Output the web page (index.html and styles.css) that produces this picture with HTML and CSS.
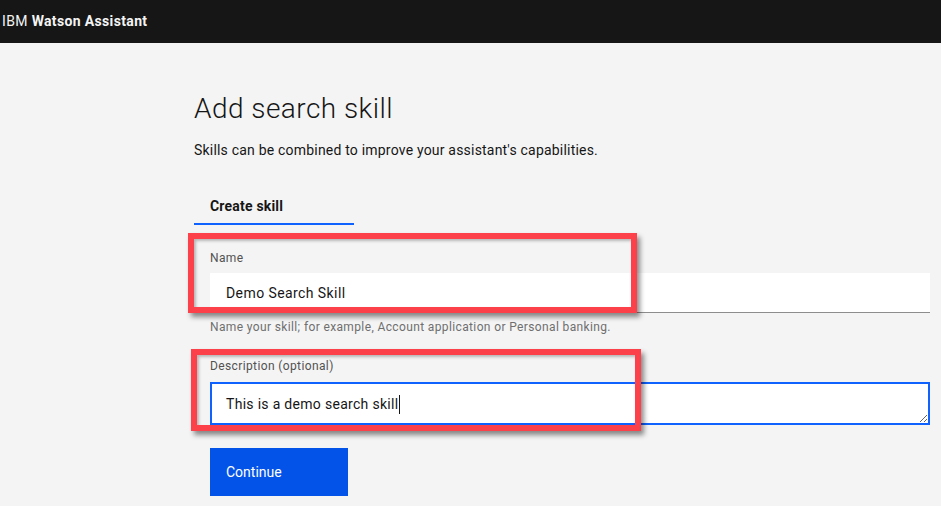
FILE: index.html
```html
<!DOCTYPE html>
<html lang="en">
<head>
<meta charset="utf-8">
<title>IBM Watson Assistant - Add search skill</title>
<link rel="stylesheet" href="styles.css">
</head>
<body>
<header class="topbar">
  <span class="brand"><span class="brand-ibm">IBM</span> <span class="brand-name">Watson Assistant</span></span>
</header>
<main class="page">
  <h1 class="title">Add search skill</h1>
  <p class="subtitle">Skills can be combined to improve your assistant's capabilities.</p>
  <div class="tabs">
    <div class="tab tab-active">Create skill</div>
  </div>
  <form class="form">
    <div class="field field-name">
      <label class="label" for="name">Name</label>
      <input class="input" id="name" type="text" value="Demo Search Skill">
      <div class="helper">Name your skill; for example, Account application or Personal banking.</div>
      <span class="annot annot-name"></span>
    </div>
    <div class="field field-desc">
      <label class="label" id="desc-label">Description (optional)</label>
      <div class="textarea" role="textbox" aria-multiline="true" aria-labelledby="desc-label">This is a demo search skill<span class="caret"></span></div>
      <span class="annot annot-desc"></span>
    </div>
    <button class="btn" type="button">Continue</button>
  </form>
</main>
</body>
</html>
```
FILE: styles.css
```css
* { box-sizing: border-box; }
html, body { margin: 0; padding: 0; }
body {
  background: #f4f4f4;
  color: #161616;
  font-family: Roboto, "Liberation Sans", sans-serif;
  letter-spacing: 0.2px;
  width: 941px;
  height: 506px;
  overflow: hidden;
}
.topbar {
  height: 43px;
  background: #161616;
  color: #f4f4f4;
  display: flex;
  align-items: center;
  padding: 0 0 2px 2px;
  font-size: 14px;
  letter-spacing: 0.35px;
}
.brand-ibm { font-weight: 400; }
.brand-name { font-weight: 700; }
.page {
  margin-left: 194px;
  width: 736px;
  padding-top: 48px;
}
.title {
  margin: 0;
  font-size: 28px;
  font-weight: 300;
  line-height: 36px;
  letter-spacing: 0.45px;
}
.subtitle {
  margin: 14px 0 0;
  font-size: 14px;
  line-height: 18px;
}
.tabs {
  margin-top: 29px;
  display: flex;
}
.tab {
  width: 160px;
  padding: 9px 16px 8px;
  font-size: 14px;
  font-weight: 700;
  line-height: 18px;
  border-bottom: 2px solid #0f62fe;
}
.form {
  padding-left: 16px;
  margin-top: 25px;
}
.field { position: relative; }
.label {
  display: block;
  font-size: 12px;
  line-height: 16px;
  color: #525252;
  letter-spacing: 0.38px;
  margin-bottom: 8px;
}
.input {
  display: block;
  width: 720px;
  height: 40px;
  margin-top: -1px;
  border: none;
  border-bottom: 1px solid #8d8d8d;
  background: #fff;
  padding: 0 16px;
  font: inherit;
  font-size: 14px;
  letter-spacing: 0.42px;
  color: #161616;
  outline: none;
}
.helper {
  margin-top: 6px;
  font-size: 12px;
  line-height: 16px;
  letter-spacing: 0.37px;
  color: #6f6f6f;
}
.field-desc { margin-top: 23px; }
.textarea {
  display: block;
  width: 720px;
  height: 43px;
  border: 2px solid #0f62fe;
  background: #fff;
  padding: 11px 14px 0;
  font-size: 14px;
  line-height: 18px;
  letter-spacing: 0.3px;
  color: #161616;
  resize: vertical;
  overflow: hidden;
}
.caret {
  display: inline-block;
  width: 1px;
  height: 19px;
  margin-left: 1px;
  vertical-align: -5px;
  background: #161616;
}
.btn {
  margin-top: 23px;
  width: 138px;
  height: 48px;
  border: none;
  background: #0353e9;
  color: #fff;
  font: inherit;
  font-size: 14px;
  text-align: left;
  padding: 0 16px;
}
.annot {
  position: absolute;
  border: 6px solid #fc414b;
  box-shadow: 3px 4px 5px rgba(0,0,0,0.45), inset 2px 2px 3px rgba(0,0,0,0.25);
  pointer-events: none;
}
.annot-name { left: -22px; top: -17px; width: 449px; height: 80px; }
.annot-desc { left: -19px; top: -9px; width: 450px; height: 82px; }
```
